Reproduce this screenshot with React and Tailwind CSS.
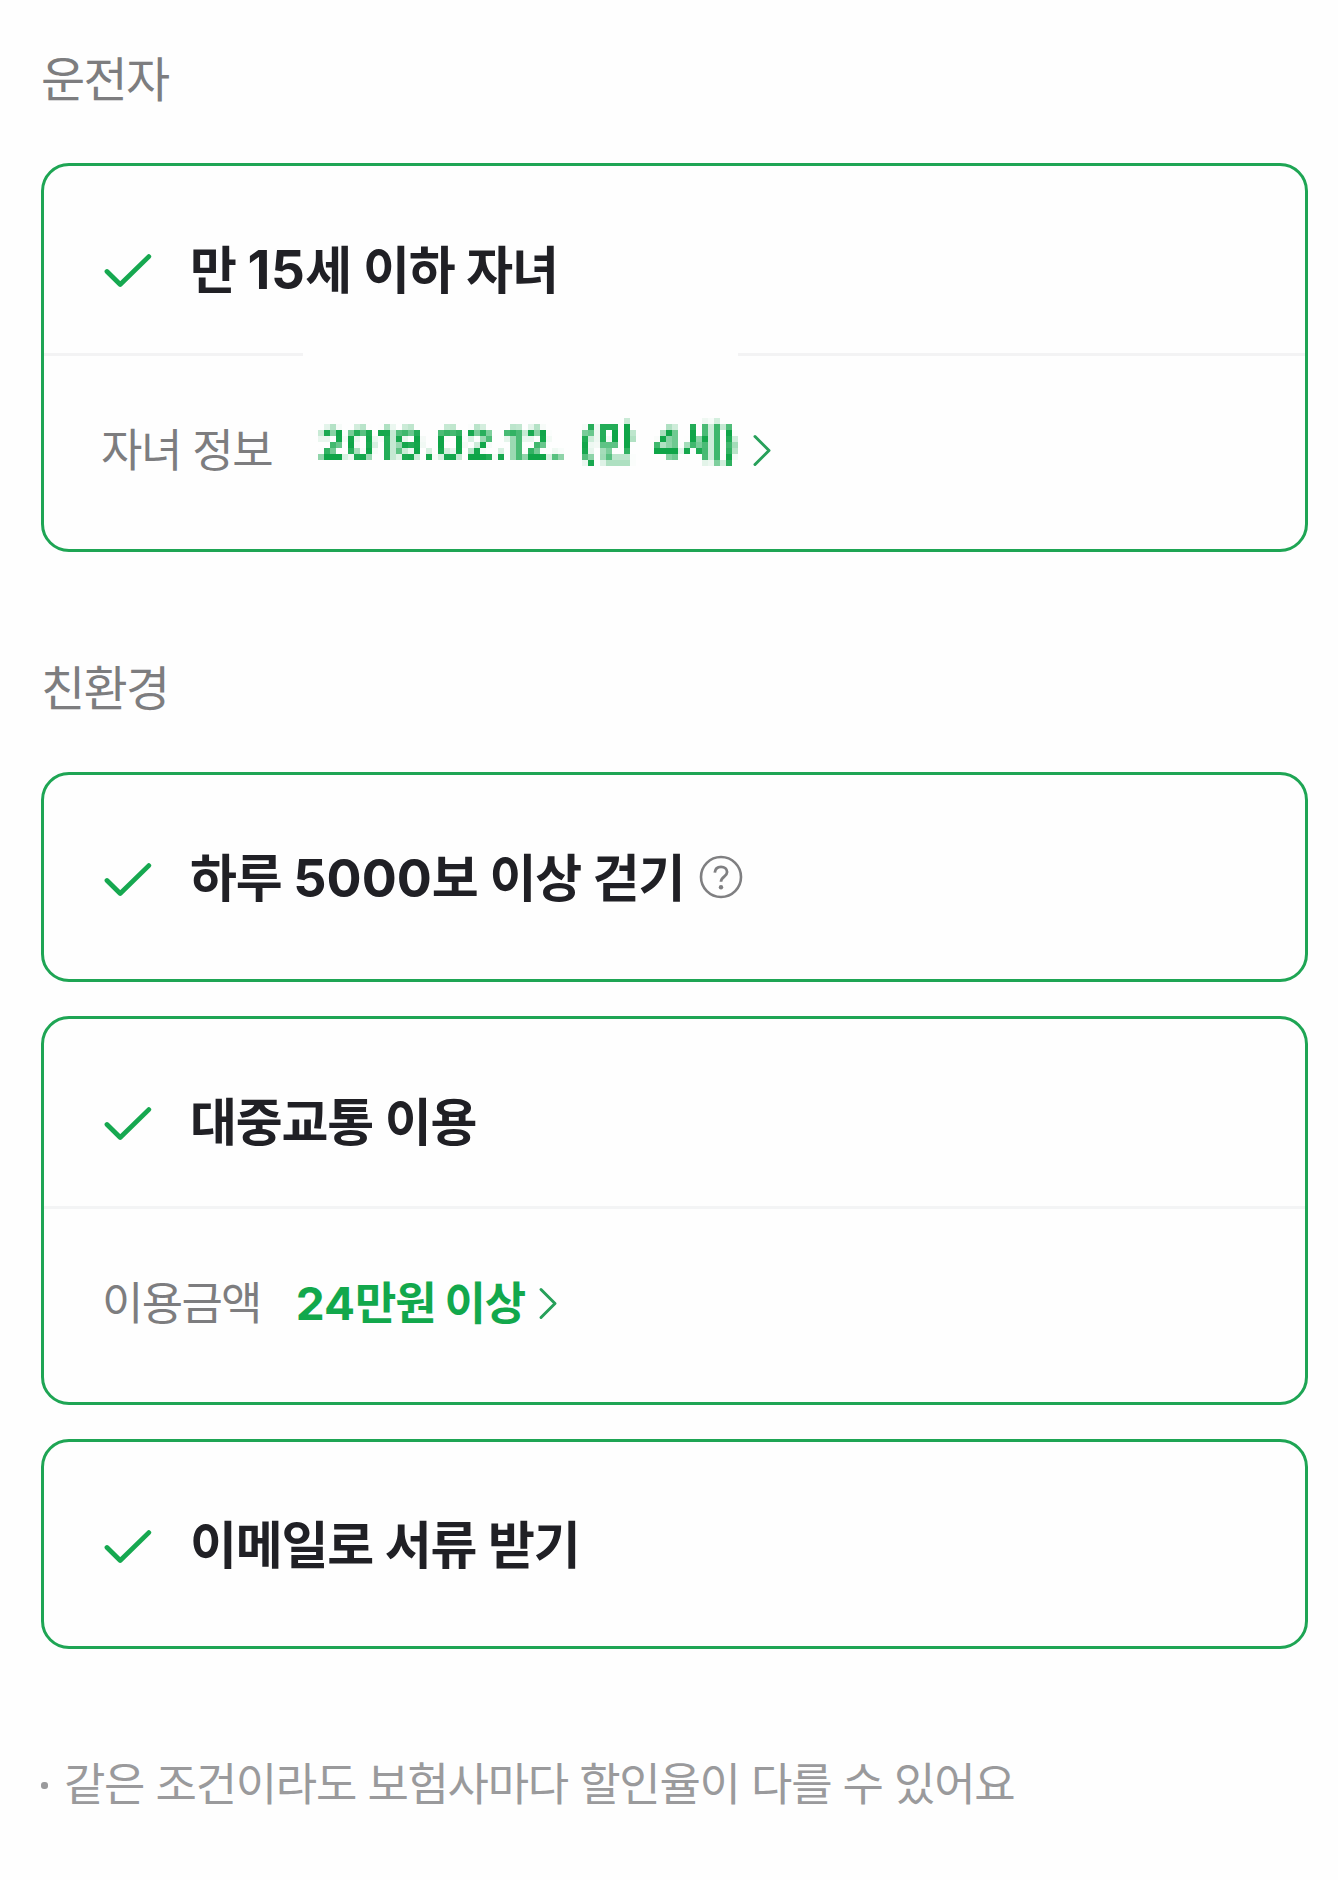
import React from "react";

function Check() {
  return (
    <svg className="mt-[1px] h-12 w-12 shrink-0" viewBox="0 0 48 48" fill="none" stroke="#16a850" strokeWidth="4.8" strokeLinecap="round" strokeLinejoin="round">
      <path d="M3 26.500 16.200 39.500 44.800 11.600" />
    </svg>
  );
}

function Chevron() {
  return (
    <svg className="h-9 w-5 shrink-0" viewBox="0 0 20 36" fill="none" stroke="#27a05a" strokeWidth="3" strokeLinecap="round" strokeLinejoin="round">
      <path d="M3 3.500 17 17.500 3 31.500" />
    </svg>
  );
}

function Help() {
  return (
    <svg className="ml-[15px] h-[44px] w-[44px] shrink-0" viewBox="0 0 44 44" fill="none" stroke="#7f7f81" strokeWidth="2.6">
      <circle cx="22" cy="22" r="20" />
      <path d="M15.8 17.6c.3-3.8 2.8-5.800 6.200-5.800 3.500 0 6.100 2.100 6.100 5.300 0 4.600-6.100 4.500-6.100 9.700" strokeWidth="2.8" />
      <circle cx="22" cy="32.200" r="2.200" fill="#7f7f81" stroke="none" />
    </svg>
  );
}

function Heading({ children }) {
  return <h2 className="text-[48px] leading-[70px] tracking-[-1.6px] text-[#7d7d7f]">{children}</h2>;
}

function Card({ title, help, children }) {
  return (
    <section className="rounded-[28px] border-[3px] border-[#1ea554]">
      <div className={`flex items-center pl-[60px] ${children ? "h-[187px] pt-[17px]" : "h-[204px]"}`}>
        <Check />
        <h3 className="ml-[38px] pt-[4px] text-[51px] font-bold leading-[72px] tracking-[-1.2px] [word-spacing:1px] whitespace-nowrap text-[#202025]">{title}</h3>
        {help && <Help />}
      </div>
      {children}
    </section>
  );
}

function Digits({ children }) {
  return <span className="text-[1.02em] tracking-normal">{children}</span>;
}

export default function App() {
  return (
    <main className="min-h-[1880px] bg-[#fefefe] pl-[41px] pr-[30px] pt-[45px] font-['Inter','Noto_Sans_CJK_KR',sans-serif]">
      <svg className="absolute h-0 w-0" aria-hidden="true">
        {/* Samples one pixel per 6px cell and grows it to fill the cell */}
        <filter id="mosaic" x="0" y="0" width="426" height="72" filterUnits="userSpaceOnUse" colorInterpolationFilters="sRGB">
          <feGaussianBlur in="SourceGraphic" stdDeviation="1" result="soft" />
          <feFlood x="2" y="2" width="1" height="1" floodColor="#000" />
          <feComposite x="0" y="0" width="6" height="6" />
          <feTile result="grid" />
          <feComposite in="soft" in2="grid" operator="in" result="dots" />
          <feOffset in="dots" dx="1" dy="0" result="dotsRight" />
          <feMerge result="pairs">
            <feMergeNode in="dots" />
            <feMergeNode in="dotsRight" />
          </feMerge>
          <feOffset in="pairs" dx="0" dy="1" result="pairsDown" />
          <feMerge>
            <feMergeNode in="pairs" />
            <feMergeNode in="pairsDown" />
          </feMerge>
          <feMorphology operator="dilate" radius="2" />
        </filter>
      </svg>

      <Heading>운전자</Heading>
      <div className="mt-[48px]">
        <Card title={<>만 <span className="text-[53px] tracking-[0.5px]">15</span>세 이하 자녀</>}>
          <div className="flex">
            <span className="h-[3px] w-[259px] bg-[#f3f3f4]" />
            <span className="ml-auto h-[3px] w-[567px] bg-[#f3f3f4]" />
          </div>
          <div className="flex h-[193px] items-center pb-[4px] pl-[57px]">
            <span className="w-[175px] pt-[1px] text-[45px] tracking-[-1.4px] whitespace-nowrap text-[#7d7d7f]">자녀 정보</span>
            <span className="mb-[16px] ml-[42px] w-[426px] text-[44px] font-bold leading-[74px] [word-spacing:5px] whitespace-nowrap text-[#0fa548] [filter:url(#mosaic)]">2019.02.12. (만 4세)</span>
            <span className="ml-[8px] flex"><Chevron /></span>
          </div>
        </Card>
      </div>

      <div className="mt-[102px]">
        <Heading>친환경</Heading>
      </div>
      <div className="mt-[48px] flex flex-col gap-[34px]">
        <Card title={<>하루 <Digits>5000</Digits>보 이상 걷기</>} help />
        <Card title="대중교통 이용">
          <div className="h-[3px] bg-[#f3f4f5]" />
          <div className="flex h-[193px] items-center pb-[4px] pl-[58px]">
            <span className="pt-[1px] text-[45px] tracking-[-1.7px] whitespace-nowrap text-[#7d7d7f]">이용금액</span>
            <span className="ml-[35px] pt-[1px] text-[45px] font-bold tracking-[-1.3px] whitespace-nowrap text-[#12a84c]"><Digits>24</Digits>만원 이상</span>
            <span className="ml-[13px] flex"><Chevron /></span>
          </div>
        </Card>
        <Card title="이메일로 서류 받기" />
      </div>

      <p className="mt-[101px] flex items-center text-[45px] leading-[70px] tracking-[-1.3px] whitespace-nowrap text-[#9a9a9c]">
        <span className="mr-[16px] mt-[1px] h-[7px] w-[7px] rounded-[3px] bg-[#9a9a9c]" />
        같은 조건이라도 보험사마다 할인율이 다를 수 있어요
      </p>
    </main>
  );
}
